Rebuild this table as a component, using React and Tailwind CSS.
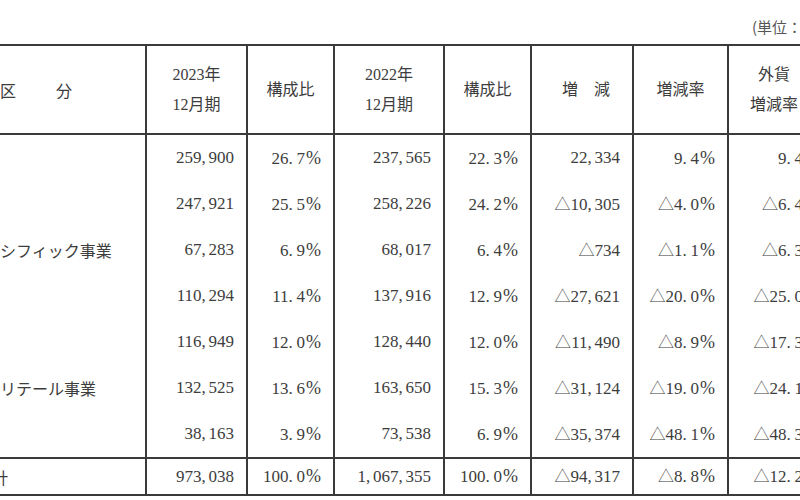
import React from 'react'

const rows = [
  ['', '259,900', '26.7%', '237,565', '22.3%', '22,334', '9.4%', '9.4%'],
  ['', '247,921', '25.5%', '258,226', '24.2%', '△10,305', '△4.0%', '△6.4%'],
  ['シフィック事業', '67,283', '6.9%', '68,017', '6.4%', '△734', '△1.1%', '△6.3%'],
  ['', '110,294', '11.4%', '137,916', '12.9%', '△27,621', '△20.0%', '△25.0%'],
  ['', '116,949', '12.0%', '128,440', '12.0%', '△11,490', '△8.9%', '△17.3%'],
  ['リテール事業', '132,525', '13.6%', '163,650', '15.3%', '△31,124', '△19.0%', '△24.1%'],
  ['', '38,163', '3.9%', '73,538', '6.9%', '△35,374', '△48.1%', '△48.3%'],
]

const total = ['計', '973,038', '100.0%', '1,067,355', '100.0%', '△94,317', '△8.8%', '△12.2%']

// mincho-ish spacing: wide comma / period slots, wide percent sign
function Num({ v }) {
  return (
    <span className="whitespace-nowrap">
      {v.split('').map((c, i) => {
        if (c === '△') return <span key={i} className="font-['Noto_Sans_CJK_JP'] text-[16px] font-light">△</span>
        if (c === ',') return <span key={i} className="inline-block w-[7px]">,</span>
        if (c === '.') return <span key={i} className="inline-block w-[8px]">.</span>
        if (c === '%') return <span key={i} className="inline-block ml-[1px] text-[18px]">%</span>
        return <span key={i}>{c}</span>
      })}
    </span>
  )
}

const cols = 'grid grid-cols-[145px_101px_87px_110px_87px_102px_95px_106px]'
const line = 'border-[#3a3a3a]'

function Cell({ children, first, last, className = '' }) {
  return (
    <div className={`${first ? '' : `border-l-2 ${line}`} ${last ? `border-r-2 ${line}` : ''} ${className}`}>
      {children}
    </div>
  )
}

export default function App() {
  return (
    <div className="w-[800px] h-[500px] overflow-hidden bg-white text-[#3d3d3d] font-['Liberation_Serif','Noto_Sans_CJK_JP',serif]">
      <div className="w-[860px]">
        {/* unit caption */}
        <div className="h-[44px] pt-[17px] pl-[752px] text-[15px] leading-[20px] whitespace-nowrap font-['Noto_Sans_CJK_JP',sans-serif] text-[#555]">
          (単位：百万円)
        </div>

        {/* header */}
        <div className={`${cols} h-[91px] border-y-2 ${line} text-[16px]`}>
          <Cell first className="flex items-center font-['Noto_Sans_CJK_JP',sans-serif]">
            <span>区</span>
            <span className="ml-[40px]">分</span>
          </Cell>
          <Cell className="flex flex-col items-center justify-center leading-[30px]">
            <span>2023年</span>
            <span>12月期</span>
          </Cell>
          <Cell className="flex items-center justify-center">構成比</Cell>
          <Cell className="flex flex-col items-center justify-center leading-[30px]">
            <span>2022年</span>
            <span>12月期</span>
          </Cell>
          <Cell className="flex items-center justify-center">構成比</Cell>
          <Cell className="flex items-center justify-center pl-[8px]">増　減</Cell>
          <Cell className="flex items-center justify-center">増減率</Cell>
          <Cell last className="flex flex-col items-center justify-center leading-[30px] pr-[12px]">
            <span>外貨</span>
            <span>増減率</span>
          </Cell>
        </div>

        {/* body */}
        {rows.map((r, i) => (
          <div key={i} className={`${cols} h-[46px] text-[17px]`}>
            {r.map((v, j) =>
              j === 0 ? (
                <Cell key={j} first className="flex items-center text-[16px] font-['Noto_Sans_CJK_JP',sans-serif] whitespace-nowrap">
                  {v}
                </Cell>
              ) : (
                <Cell key={j} last={j === 7} className="flex items-center justify-end pr-[12px]">
                  <Num v={v} />
                </Cell>
              )
            )}
          </div>
        ))}

        {/* total */}
        <div className={`${cols} h-[39px] border-y-2 ${line} text-[17px]`}>
          {total.map((v, j) =>
            j === 0 ? (
              <Cell key={j} first className="flex items-center overflow-hidden text-[16px] font-['Noto_Sans_CJK_JP',sans-serif]">
                <span className="-ml-[8px]">{v}</span>
              </Cell>
            ) : (
              <Cell key={j} last={j === 7} className="flex items-center justify-end pr-[12px]">
                <Num v={v} />
              </Cell>
            )
          )}
        </div>
      </div>
    </div>
  )
}
